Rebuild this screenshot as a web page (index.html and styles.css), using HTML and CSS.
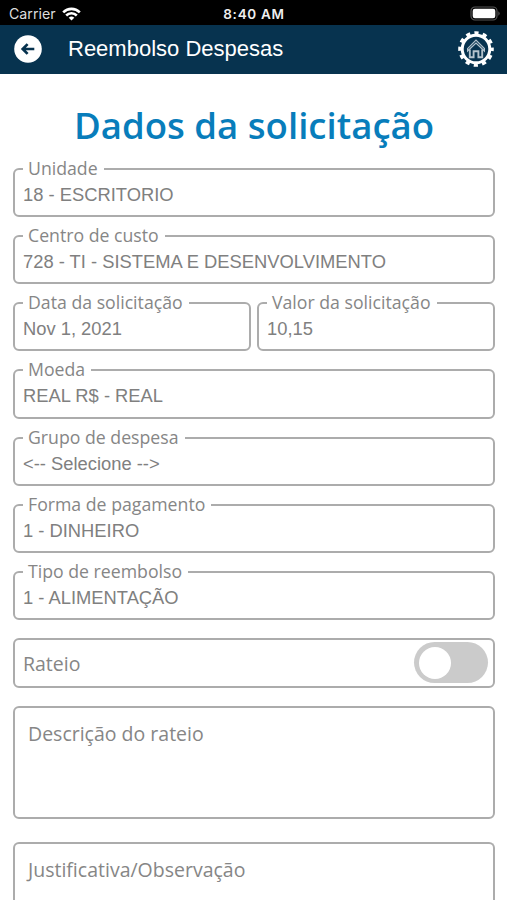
FILE: index.html
```html
<!DOCTYPE html>
<html lang="pt-BR">
<head>
    <meta charset="UTF-8">
    <meta name="viewport" content="width=device-width, initial-scale=1.0">
    <title>Reembolso Despesas</title>
    <link rel="stylesheet" href="styles.css">
</head>
<body>
    <div class="status-bar">
        <div class="carrier">
            <span>Carrier</span>
            <svg width="19" height="14" viewBox="0 0 19 14" fill="none" stroke="#fff" stroke-width="2.6">
                <path d="M1.2 5.3a11.8 11.8 0 0 1 16.6 0"/>
                <path d="M4.2 8.5a7.5 7.5 0 0 1 10.6 0"/>
                <path d="M9.5 13.6L6.7 10.8a4 4 0 0 1 5.6 0z" fill="#fff" stroke="none"/>
            </svg>
        </div>
        <div class="clock">8:40 AM</div>
        <div class="battery">
            <svg width="31" height="15" viewBox="0 0 31 15">
                <rect x="1" y="1" width="26" height="13" rx="4" fill="none" stroke="#555" stroke-width="1.2"/>
                <rect x="2.7" y="2.7" width="22.6" height="9.6" rx="2.2" fill="#fff"/>
                <path d="M28.3 5.2a2.6 2.6 0 0 1 0 4.6z" fill="#555"/>
            </svg>
        </div>
    </div>

    <header class="top-bar">
        <a class="back" href="#">
            <svg width="28" height="28" viewBox="0 0 28 28">
                <circle cx="14" cy="14" r="13.8" fill="#fff"/>
                <path d="M20.3 14H8.9M13.6 9.1L8.7 14l4.9 4.9" fill="none" stroke="#07334f" stroke-width="2.7"/>
            </svg>
        </a>
        <h1>Reembolso Despesas</h1>
        <a class="home" href="#">
            <svg width="36" height="36" viewBox="-18 -18 36 36" fill="none" stroke="#fff">
                <circle r="13.8" stroke-width="3"/>
                <circle r="16" stroke-width="3.6" stroke-dasharray="4.2 4.178" stroke-dashoffset="2.1"/>
                <path d="M-8.4 -0.4L0 -8.8L8.4 -0.4V2L0 -6L-8.4 2z" stroke="#b4c3cd" stroke-width="1.2"/>
                <path d="M-6.2 0.4V8.2H-2.4V2.2H2.4V8.2H6.2V0.4" stroke="#b4c3cd" stroke-width="1.9"/>
            </svg>
        </a>
    </header>

    <main>
        <h2>Dados da solicitação</h2>
        <form>
            <div class="field">
                <label>Unidade</label>
                <span class="value">18 - ESCRITORIO</span>
            </div>
            <div class="field">
                <label>Centro de custo</label>
                <span class="value">728 - TI - SISTEMA E DESENVOLVIMENTO</span>
            </div>
            <div class="row">
                <div class="field">
                    <label>Data da solicitação</label>
                    <span class="value">Nov 1, 2021</span>
                </div>
                <div class="field">
                    <label>Valor da solicitação</label>
                    <span class="value">10,15</span>
                </div>
            </div>
            <div class="field">
                <label>Moeda</label>
                <span class="value">REAL R$ - REAL</span>
            </div>
            <div class="field">
                <label>Grupo de despesa</label>
                <span class="value">&lt;-- Selecione --&gt;</span>
            </div>
            <div class="field">
                <label>Forma de pagamento</label>
                <span class="value">1 - DINHEIRO</span>
            </div>
            <div class="field">
                <label>Tipo de reembolso</label>
                <span class="value">1 - ALIMENTAÇÃO</span>
            </div>
            <div class="field toggle-field">
                <span class="caption">Rateio</span>
                <span class="switch"></span>
            </div>
            <div class="field area">
                <span class="caption">Descrição do rateio</span>
            </div>
            <div class="field area last">
                <span class="caption">Justificativa/Observação</span>
            </div>
        </form>
    </main>
</body>
</html>
```

FILE: styles.css
```css
* {
    box-sizing: border-box;
}

body {
    margin: 0;
    height: 900px;
    overflow: hidden;
    background: #fff;
    color: #868686;
    font-family: "Open Sans", sans-serif;
}

.status-bar {
    display: grid;
    grid-template-columns: 1fr auto 1fr;
    align-items: center;
    height: 25px;
    padding: 2px 6px 0 9px;
    background: #000;
    color: #fff;
    font-family: Inter, sans-serif;
    font-size: 14.2px;
}
.carrier {
    display: flex;
    align-items: center;
    gap: 6px;
    color: #ddd;
}
.clock {
    margin-left: -2px;
    color: #eee;
    font-size: 13.5px;
    font-weight: 600;
    letter-spacing: 0.7px;
}
.battery {
    display: flex;
    justify-content: flex-end;
}

.top-bar {
    display: flex;
    align-items: center;
    height: 49px;
    padding: 0 13px 1px 14px;
    background: #07334f;
}
.top-bar h1 {
    flex: 1;
    margin: 0 0 0 26px;
    color: #fff;
    font-family: "Liberation Sans", sans-serif;
    font-size: 22px;
    font-weight: normal;
}
.back, .home {
    display: flex;
}

main {
    padding: 26px 12px 0 13px;
}

h2 {
    margin: 0 0 17.5px;
    color: #087dbb;
    font-size: 36.6px;
    font-weight: 600;
    line-height: 50px;
    text-align: center;
    white-space: nowrap;
}

form {
    display: flex;
    flex-direction: column;
    gap: 18px;
}

.row {
    display: grid;
    grid-template-columns: 1fr 1fr;
    gap: 6px;
}

.field {
    position: relative;
    display: flex;
    align-items: center;
    height: 49.25px;
    padding: 5px 8px 0;
    border: 2px solid #acacac;
    border-radius: 6px;
    white-space: nowrap;
}

/* the label sits on top of the border */
.field label {
    position: absolute;
    top: -14px;
    left: 8px;
    padding: 0 6px 0 5px;
    background: #fff;
    font-size: 17.7px;
    line-height: 24px;
}

.value {
    color: #808080;
    font-family: "Liberation Sans", sans-serif;
    font-size: 18.35px;
}

.caption {
    font-size: 19.5px;
}

.toggle-field {
    justify-content: space-between;
    padding: 1px 5px 0 8px;
}

.switch {
    width: 74px;
    height: 41px;
    margin-top: -1px;
    padding: 5px;
    border-radius: 21px;
    background: #cbcbcb;
}
.switch::before {
    content: "";
    display: block;
    width: 32px;
    height: 32px;
    border-radius: 50%;
    background: #fff;
}

.area {
    align-items: flex-start;
    height: 113px;
    padding: 12px 13px;
}

/* runs off the bottom of the screen, so only its upper part is kept */
.last {
    height: 58px;
    margin-top: 5.5px;
    border-bottom: 0;
    border-radius: 6px 6px 0 0;
}
```
